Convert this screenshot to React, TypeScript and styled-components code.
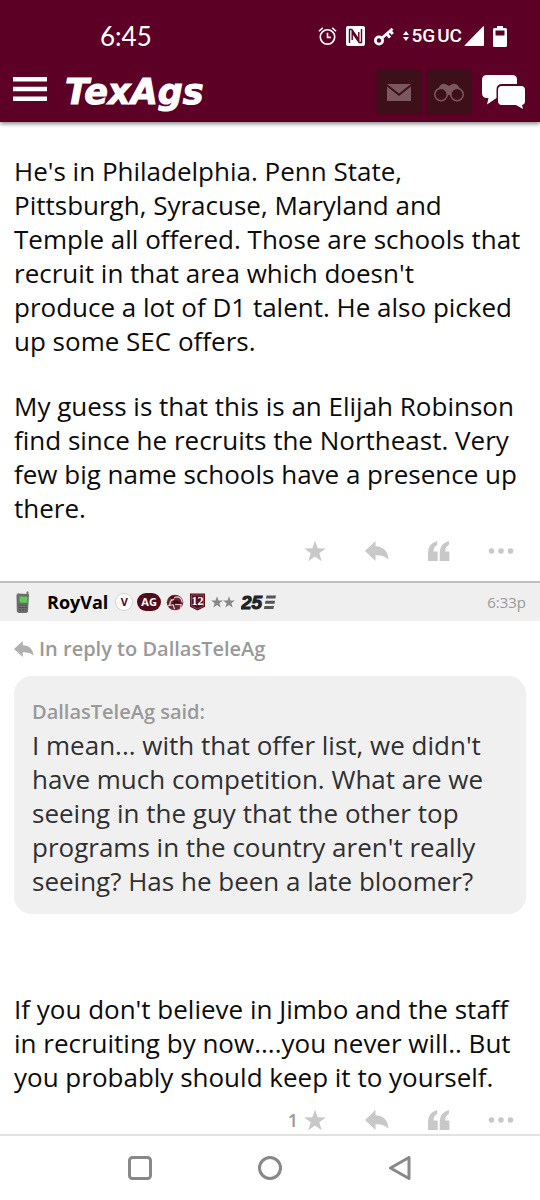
import React from "react";
import styled, { createGlobalStyle, css } from "styled-components";

const maroon = "#5c0025";
const sans = `"Open Sans", "Noto Sans", sans-serif`;

const GlobalStyle = createGlobalStyle`
  *, *::before, *::after { box-sizing: border-box; }
  body { margin: 0; background: #fff; color: #0c0c0c; font-family: ${sans}; }
  button { appearance: none; border: 0; margin: 0; padding: 0; background: none; color: inherit; font: inherit; cursor: pointer; }
  a { color: inherit; text-decoration: none; }
  svg { display: block; flex: none; }
`;

const Page = styled.div`
  display: flex;
  flex-direction: column;
  min-height: 100vh;
`;

const TopBar = styled.header`
  background: ${maroon};
  color: #fff;
  box-shadow: 0 2px 4px rgba(0, 0, 0, 0.45);
`;

const StatusBar = styled.div`
  display: flex;
  align-items: center;
  justify-content: space-between;
  height: 64px;
  padding: 8px 33px 0 100px;
`;

const Clock = styled.time`
  font: 400 26px/32px Lato, sans-serif;
`;

const StatusIcons = styled.div`
  display: flex;
  align-items: center;
  gap: 9px;
`;

const Network = styled.span`
  display: flex;
  align-items: center;
  gap: 2px;
  font: 500 19px/20px Roboto, sans-serif;
`;

const NavBar = styled.nav`
  display: flex;
  align-items: center;
  height: 58px;
  padding: 0 11px 2px 13px;
`;

const MenuButton = styled.button`
  padding-bottom: 6px;
`;

const Logo = styled.a`
  margin: 0 auto 0 18px;
  font: italic 700 35px/40px "DejaVu Sans", sans-serif;
  -webkit-text-stroke: 1px #fff;
`;

const HeaderButtons = styled.div`
  display: flex;
  align-items: center;
  gap: 6px;
`;

const TileButton = styled.button<{ $plain?: boolean }>`
  display: grid;
  place-items: center;
  width: ${(p) => (p.$plain ? 52 : 44)}px;
  height: 44px;
  border-radius: 3px;
  ${(p) =>
    !p.$plain &&
    css`
      background: #3d0f19;
      color: #7b585f;
      box-shadow: 0 0 2px #3d0f19;
    `}
`;

const Thread = styled.main`
  flex: 1;
`;

const PostText = styled.p<{ $quoted?: boolean }>`
  margin: 0;
  color: ${(p) => (p.$quoted ? "#303030" : "#0c0c0c")};
  font-size: 26px;
  line-height: 34px;
  white-space: pre-line;

  & + & {
    margin-top: 31px;
  }
`;

const PostBody = styled.div<{ $afterQuote?: boolean }>`
  padding: ${(p) => (p.$afterQuote ? 78 : 32)}px 8px 0 14px;
`;

const Actions = styled.div<{ $last?: boolean }>`
  display: flex;
  justify-content: flex-end;
  padding: 14px 8px ${(p) => (p.$last ? 2 : 18)}px 0;
  color: #c8c8c8;
`;

const ActionButton = styled.button`
  display: flex;
  align-items: center;
  justify-content: center;
  position: relative;
  width: 62px;
  height: 24px;
`;

const StarCount = styled.span`
  position: absolute;
  right: 48px;
  color: #999;
  font-size: 18px;
  font-weight: 600;
`;

const PostHeader = styled.div`
  display: flex;
  align-items: center;
  height: 40px;
  padding: 0 14px;
  border-top: 2px solid #bfbfbf;
  background: #efefef;
`;

const UserName = styled.a`
  margin: 0 8px 0 16px;
  color: #000;
  font-size: 18px;
  font-weight: 700;
`;

const Badges = styled.div`
  display: flex;
  align-items: center;
  gap: 6px;
`;

const Badge = styled.span<{ $filled?: boolean }>`
  display: grid;
  place-items: center;
  min-width: 16px;
  height: 16px;
  padding: 0 ${(p) => (p.$filled ? 3 : 0)}px;
  border-radius: 8px;
  background: ${(p) => (p.$filled ? "#500c1c" : "#fff")};
  box-shadow: 0 0 0 1px ${(p) => (p.$filled ? "#500c1c" : "#d4d4d4")};
  color: ${(p) => (p.$filled ? "#fff" : "#500c1c")};
  font: 700 11px/16px "Open Sans", sans-serif;
`;

const Stars = styled.span`
  display: flex;
`;

const PostTime = styled.time`
  margin-left: auto;
  color: #999;
  font-size: 15px;
`;

const ReplyLink = styled.a`
  display: flex;
  align-items: center;
  gap: 5px;
  height: 55px;
  padding: 0 14px;
  color: #999;
  font-size: 20px;
  font-weight: 600;
`;

const Quote = styled.blockquote`
  margin: 0 14px;
  padding: 20px 8px 16px 18px;
  border-radius: 18px;
  background: #f0f0f0;
`;

const QuoteAuthor = styled.cite`
  display: block;
  color: #999;
  font-size: 20px;
  font-style: normal;
  font-weight: 600;
  line-height: 32px;
`;

const SystemNav = styled.nav`
  display: flex;
  justify-content: center;
  align-items: center;
  height: 66px;
  border-top: 2px solid #e2e2e2;
`;

const SystemButton = styled.button`
  display: grid;
  place-items: center;
  width: 24%;
  height: 48px;
`;

const AlarmIcon = () => (
  <svg width="19" height="20" viewBox="0 0 20 20" fill="none" stroke="#fff" strokeWidth="1.7" aria-hidden>
    <circle cx="10" cy="11" r="7.6" />
    <path d="M10 6.5v5h3.5M1 5l4-3.5M19 5l-4-3.5" />
  </svg>
);

const NfcIcon = () => (
  <svg width="19" height="20" viewBox="0 0 19 20" aria-hidden>
    <rect width="19" height="20" rx="2" fill="#fff" />
    <path d="M3.500 17V3.500h2.300l7 10V6M15.500 3v13.500h-2.300l-7-10V14" fill="none" stroke={maroon} strokeWidth="1.400" />
  </svg>
);

const KeyIcon = () => (
  <svg width="20" height="19" viewBox="0 0 20 19" fill="none" stroke="#fff" aria-hidden>
    <circle cx="5" cy="13.5" r="3.6" strokeWidth="2.8" />
    <path d="M8 11L18.5 1.8M13 7l3 3.6M16.2 4l2.6 3" strokeWidth="2.8" />
  </svg>
);

const DataIcon = () => (
  <svg width="6" height="10" viewBox="0 0 6 10" fill="#fff" aria-hidden>
    <path d="M3 0l3 4H0zM3 10l3-4H0z" />
  </svg>
);

const SignalIcon = () => (
  <svg width="20" height="20" viewBox="0 0 20 20" fill="#fff" aria-hidden>
    <path d="M19 0.5Q20 0 20 1v18q0 1-1 1H1q-1 0-.3-.8z" />
  </svg>
);

const BatteryIcon = () => (
  <svg width="14" height="21" viewBox="0 0 14 21" fill="#fff" aria-hidden>
    <path fillRule="evenodd" d="M4 0h6v2h2.500q1.500 0 1.500 1.500V19.500q0 1.500-1.500 1.500h-11Q0 21 0 19.500V3.500Q0 2 1.500 2H4zM2.500 4.500v5h9v-5z" />
  </svg>
);

const MenuIcon = () => (
  <svg width="34" height="26" viewBox="0 0 34 26" fill="#fff" aria-hidden>
    <path d="M0 1h34v4.500H0zM0 10.700h34v4.500H0zM0 20.500h34V25H0z" />
  </svg>
);

const MailIcon = () => (
  <svg width="24" height="17" viewBox="0 0 24 17" fill="currentColor" aria-hidden>
    <path d="M0 0h24L12 9.500zM0 2.500l12 9.500 12-9.500V17H0z" />
  </svg>
);

const BinocularsIcon = () => (
  <svg width="30" height="19" viewBox="0 0 30 19" aria-hidden>
    <path d="M1 11L6 2.500Q9-.5 12.500 1.500L15 3l2.500-1.500Q21-.5 24 2.500L29 11l-9 2-5-1-5 1z" fill="currentColor" />
    <g fill="#3d0f19" stroke="currentColor" strokeWidth="1.500">
      <circle cx="7" cy="11.500" r="6.200" />
      <circle cx="23" cy="11.500" r="6.200" />
    </g>
  </svg>
);

const ChatIcon = () => (
  <svg width="43" height="34" viewBox="0 0 43 34" fill="#fff" aria-hidden>
    <path d="M5 0h25q5 0 5 4.500V9H20q-5.500 0-5.500 5.500V23L5 29.500 6.500 23H5q-5 0-5-5V5q0-5 5-5z" />
    <path d="M20 11h19q4 0 4 4v11q0 3.500-3 4l1 4L34 30H20q-4 0-4-4V15q0-4 4-4z" />
  </svg>
);

const StarIcon = ({ size = 22, color = "currentColor" }: { size?: number; color?: string }) => (
  <svg width={size} height={size} viewBox="0 0 22 22" fill={color} aria-hidden>
    <path d="M11 .5l2.700 7.700 8.100.2-6.500 4.900 2.400 7.900L11 16.500l-6.700 4.700 2.400-7.900L.2 8.400l8.100-.2z" />
  </svg>
);

const ReplyIcon = ({ width = 24, height = 20, color = "currentColor" }: { width?: number; height?: number; color?: string }) => (
  <svg width={width} height={height} viewBox="0 0 24 20" preserveAspectRatio="none" fill={color} aria-hidden>
    <path d="M0 10L10.500 0v5.300C18 5.500 23 10 23.500 18.500 20 15 16 14 10.500 14.200V20z" />
  </svg>
);

const QuoteIcon = () => (
  <svg width="22" height="20" viewBox="0 0 22 20" fill="currentColor" aria-hidden>
    <path d="M9.200 0v4Q5.500 5.500 5.500 10.500H9.700V20H0v-8.500Q0 2.500 9.200 0z" />
    <path d="M20.900 0v4q-3.700 1.500-3.700 6.500h4.200V20h-9.700v-8.500Q11.700 2.500 20.900 0z" />
  </svg>
);

const MoreIcon = () => (
  <svg width="26" height="6" viewBox="0 0 26 6" fill="currentColor" aria-hidden>
    <circle cx="3.500" cy="3" r="2.800" />
    <circle cx="13" cy="3" r="2.800" />
    <circle cx="22.500" cy="3" r="2.800" />
  </svg>
);

const PhoneIcon = () => (
  <svg width="17" height="23" viewBox="0 0 17 23" aria-hidden>
    <path d="M12.500 1q1-1.500 2 0v5h-2z" fill="#777" />
    <path d="M4 2.500L14 3q1 .2 1 1.300l-1 16q-.3 1.700-2 1.700H5q-2 0-2.200-2L2.500 4.500Q2.500 2.500 4 2.500z" fill="#6d6d6d" />
    <path d="M5.500 5.500l8 .3-.2 6-7.500-.3z" fill="#58d04d" />
    <path d="M4.500 14h8.500M4.700 16.500h8M5 19h7.500" stroke="#484848" strokeWidth="1.200" strokeDasharray="2 1" />
  </svg>
);

const RingIcon = () => (
  <svg width="18" height="17" viewBox="0 0 20 18" aria-hidden>
    <ellipse cx="10" cy="9" rx="9.200" ry="8.500" fill="#6b2434" />
    <path d="M4 12Q5 4 11 3t7 6" fill="none" stroke="#d9c2c7" strokeWidth="1.500" />
    <path d="M7 11q1-5 5-4.500t4 5z" fill="#3d0813" />
    <path d="M2 12.500l6-1 1.500 5M10 11l7 .5-1 4M6 7l3-2" fill="none" stroke="#e6d6d9" strokeWidth="1.200" />
    <circle cx="7" cy="3.500" r="2" fill="#4a0a18" />
  </svg>
);

const ShieldIcon = () => (
  <svg width="15" height="18" viewBox="0 0 15 18" role="img" aria-label="12">
    <path d="M0 .5h15v13.200L7.500 17.500 0 13.700z" fill="#5a1022" />
    <path d="M1.500 2h12v10.900l-6 3-6-3z" fill="none" stroke="#a9808a" strokeWidth=".5" />
    <text x="7.500" y="12" textAnchor="middle" fill="#fff" fontFamily="Liberation Serif, serif" fontSize="12" fontWeight="700">12</text>
  </svg>
);

const Plan25Icon = () => (
  <svg width="36" height="24" viewBox="0 0 36 24" role="img" aria-label="25">
    <text x="0" y="19" fill="#222" stroke="#222" strokeWidth="1" fontFamily="Liberation Sans, sans-serif" fontSize="19" fontWeight="700" fontStyle="italic">25</text>
    <path d="M25.500 5.500h9.500l-.6 3h-9.500zM24.500 10.700h9.500l-.6 3h-9.500zM23.500 16h9.500l-.6 3h-9.500z" fill="#555" />
  </svg>
);

const PostActions = ({ stars, last }: { stars?: number; last?: boolean }) => (
  <Actions $last={last}>
    <ActionButton aria-label="Star">
      {stars !== undefined && <StarCount>{stars}</StarCount>}
      <StarIcon />
    </ActionButton>
    <ActionButton aria-label="Reply"><ReplyIcon /></ActionButton>
    <ActionButton aria-label="Quote"><QuoteIcon /></ActionButton>
    <ActionButton aria-label="More"><MoreIcon /></ActionButton>
  </Actions>
);

const firstPost = [
  `He's in Philadelphia. Penn State,
Pittsburgh, Syracuse, Maryland and
Temple all offered. Those are schools that
recruit in that area which doesn't
produce a lot of D1 talent. He also picked
up some SEC offers.`,
  `My guess is that this is an Elijah Robinson
find since he recruits the Northeast. Very
few big name schools have a presence up
there.`,
];

const quotedPost = `I mean... with that offer list, we didn't
have much competition. What are we
seeing in the guy that the other top
programs in the country aren't really
seeing? Has he been a late bloomer?`;

const replyPost = `If you don't believe in Jimbo and the staff
in recruiting by now....you never will.. But
you probably should keep it to yourself.`;

export default function App() {
  return (
    <Page>
      <GlobalStyle />
      <TopBar>
        <StatusBar>
          <Clock>6:45</Clock>
          <StatusIcons>
            <AlarmIcon />
            <NfcIcon />
            <KeyIcon />
            <Network>
              <DataIcon />
              <span>5G</span>
              <span>UC</span>
              <SignalIcon />
            </Network>
            <BatteryIcon />
          </StatusIcons>
        </StatusBar>
        <NavBar>
          <MenuButton aria-label="Menu"><MenuIcon /></MenuButton>
          <Logo href="#">TexAgs</Logo>
          <HeaderButtons>
            <TileButton aria-label="Messages"><MailIcon /></TileButton>
            <TileButton aria-label="Watched topics"><BinocularsIcon /></TileButton>
            <TileButton $plain aria-label="Forums"><ChatIcon /></TileButton>
          </HeaderButtons>
        </NavBar>
      </TopBar>
      <Thread>
        <article>
          <PostBody>
            {firstPost.map((text) => (
              <PostText key={text}>{text}</PostText>
            ))}
          </PostBody>
          <PostActions />
        </article>
        <article>
          <PostHeader>
            <PhoneIcon />
            <UserName href="#">RoyVal</UserName>
            <Badges>
              <Badge>V</Badge>
              <Badge $filled>AG</Badge>
              <RingIcon />
              <ShieldIcon />
              <Stars>
                <StarIcon size={12} color="#888" />
                <StarIcon size={12} color="#888" />
              </Stars>
              <Plan25Icon />
            </Badges>
            <PostTime>6:33p</PostTime>
          </PostHeader>
          <ReplyLink href="#">
            <ReplyIcon width={20} height={16} color="#b0b0b0" />
            In reply to DallasTeleAg
          </ReplyLink>
          <Quote>
            <QuoteAuthor>DallasTeleAg said:</QuoteAuthor>
            <PostText $quoted>{quotedPost}</PostText>
          </Quote>
          <PostBody $afterQuote>
            <PostText>{replyPost}</PostText>
          </PostBody>
          <PostActions stars={1} last />
        </article>
      </Thread>
      <SystemNav>
        <SystemButton aria-label="Recent apps">
          <svg width="24" height="24" viewBox="0 0 24 24" fill="none" stroke="#888" strokeWidth="3" aria-hidden>
            <rect x="1.500" y="1.500" width="21" height="21" rx="3" />
          </svg>
        </SystemButton>
        <SystemButton aria-label="Home">
          <svg width="24" height="24" viewBox="0 0 24 24" fill="none" stroke="#888" strokeWidth="3" aria-hidden>
            <circle cx="12" cy="12" r="10.500" />
          </svg>
        </SystemButton>
        <SystemButton aria-label="Back">
          <svg width="24" height="24" viewBox="0 0 24 24" fill="none" stroke="#888" strokeWidth="3" strokeLinejoin="round" aria-hidden>
            <path d="M21 1.500v21L2.500 12z" />
          </svg>
        </SystemButton>
      </SystemNav>
    </Page>
  );
}
